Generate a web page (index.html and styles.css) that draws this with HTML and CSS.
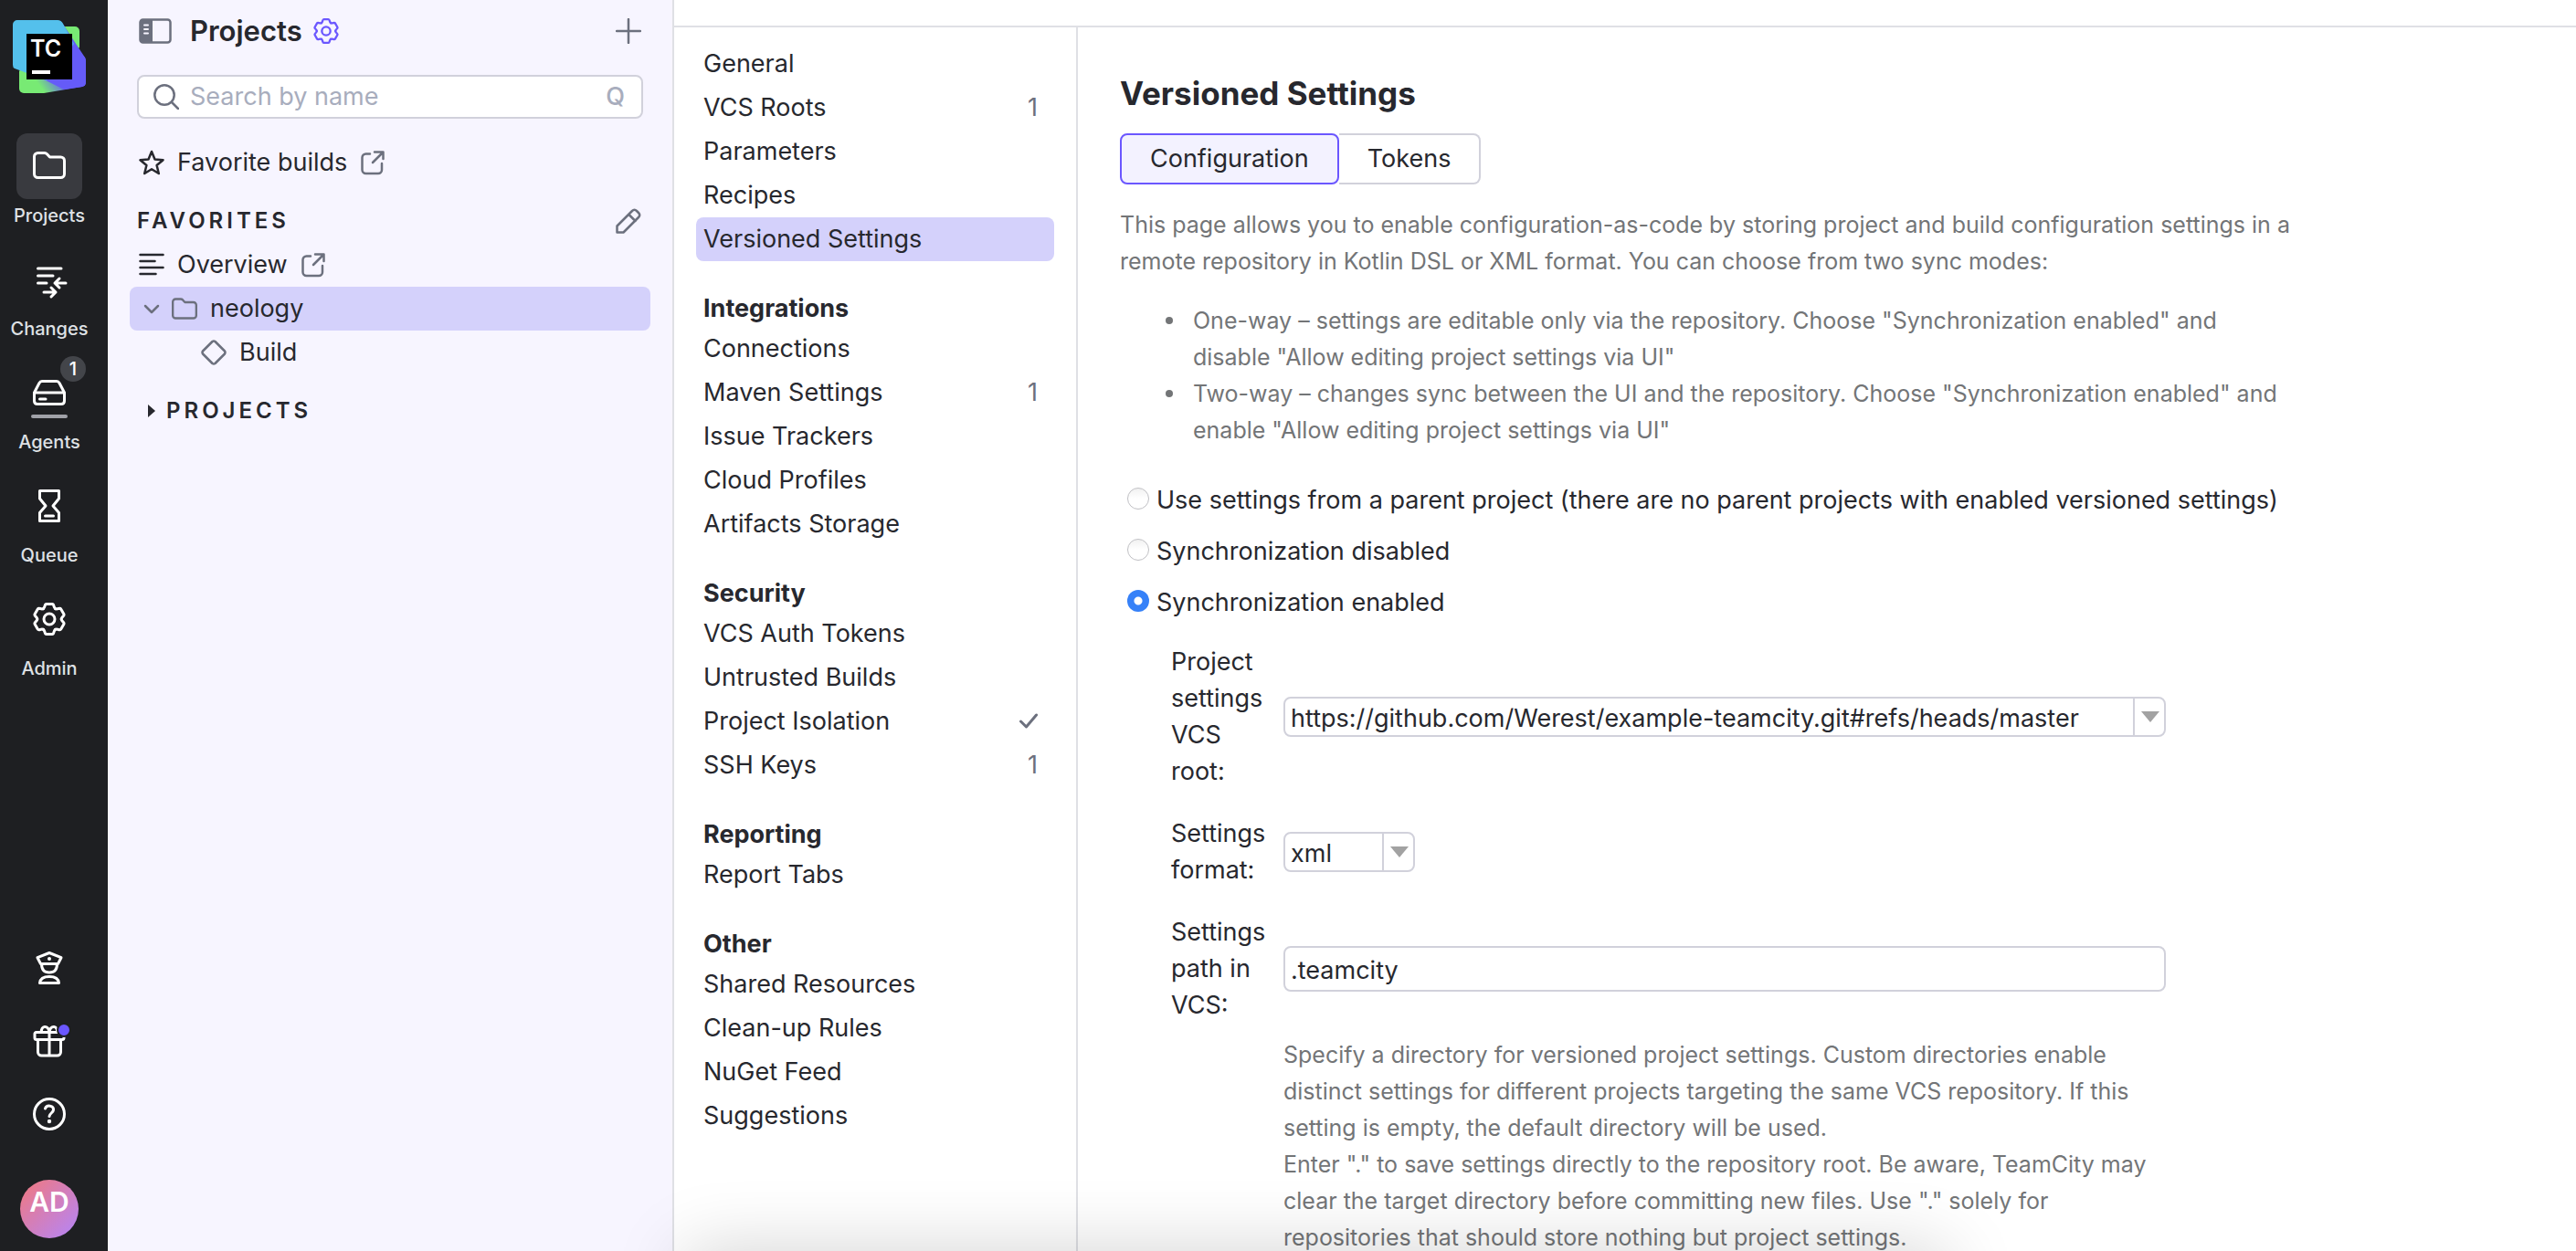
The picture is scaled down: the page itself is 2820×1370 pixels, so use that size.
FILE: index.html
```html
<!DOCTYPE html>
<html lang="en">
<head>
<meta charset="utf-8">
<title>Versioned Settings</title>
<link rel="stylesheet" href="styles.css">
</head>
<body>
<svg class="defs" aria-hidden="true">
  <symbol id="gear" viewBox="-18 -18 36 36">
    <g id="gear-teeth">
      <path id="tooth" d="M-6.6-11.4C-4.3-12.8-5.5-16.5-3.2-16.5H3.2C5.5-16.5 4.3-12.8 6.6-11.4"/>
      <use href="#tooth" transform="rotate(60)"/>
      <use href="#tooth" transform="rotate(120)"/>
      <use href="#tooth" transform="rotate(180)"/>
      <use href="#tooth" transform="rotate(240)"/>
      <use href="#tooth" transform="rotate(300)"/>
    </g>
    <circle r="6"/>
  </symbol>
  <symbol id="external" viewBox="0 0 28 28">
    <path d="M11 4.500H6.500a4 4 0 0 0-4 4V22a4 4 0 0 0 4 4H20a4 4 0 0 0 4-4v-7M16 2.500h9.500V10M25 3L14 14"/>
  </symbol>
  <symbol id="folder" viewBox="0 0 36 30">
    <path d="M1.500 5.500a4 4 0 0 1 4-4h7a4 4 0 0 1 3 1.200L18.500 6h12a4 4 0 0 1 4 4v14.500a4 4 0 0 1-4 4h-25a4 4 0 0 1-4-4z"/>
  </symbol>
</svg>

<div class="app">
  <nav class="rail" aria-label="Main">
    <a class="logo" href="#" aria-label="TeamCity">
      <svg width="80" height="80" viewBox="0 0 80 80">
        <defs>
          <linearGradient id="lg-low" x1="0.1" y1="0.8" x2="0.6" y2="0.5"><stop offset="0.25" stop-color="#78ea74"/><stop offset="0.85" stop-color="#655bf8"/></linearGradient>
          <linearGradient id="lg-blue" x1="0" y1="0" x2="0.9" y2="0.9"><stop offset="0.6" stop-color="#54c0ec"/><stop offset="1" stop-color="#5a7df5"/></linearGradient>
        </defs>
        <path d="M40 7h28a5 5 0 0 1 5 5v18L60 40z" fill="#78ea74"/>
        <path d="M7 56l28-36 30 5 14 16q1 2 1 4v23q0 4-4 5l-42 7H12a5 5 0 0 1-5-5z" fill="url(#lg-low)"/>
        <path d="M54 3l25 38q1 2 1 4v23q0 4-4 5l-20 3-28-14z" fill="#655bf8"/>
        <path d="M5 0h44q4 0 6 4l12 22-30 40L2 53q-2-1-2-4V5a5 5 0 0 1 5-5z" fill="url(#lg-blue)"/>
        <path d="M15 15h50v50H15z" fill="#000"/>
        <path d="M21 55h20v4H21z" fill="#fff"/>
        <text x="19" y="40" class="logo-text">TC</text>
      </svg>
    </a>
    <div class="rail-main">
      <a class="rail-item" href="#">
        <span class="rail-icon selected"><svg class="line" viewBox="0 0 40 40"><use href="#folder" x="2" y="4" width="36" height="30"/></svg></span>
        Projects
      </a>
      <a class="rail-item" href="#">
        <span class="rail-icon"><svg class="line" viewBox="0 0 40 40"><path d="M7.500 8H33M7.500 16H24M7.500 24H17M38 24H26M31 19l-5 5 5 5M14 34h13M22 29l5 5-5 5"/></svg></span>
        Changes
      </a>
      <a class="rail-item" href="#">
        <span class="rail-icon"><svg class="line" viewBox="0 0 40 40"><path d="M3.500 20L9 9.500Q10 7.500 12 7.500H28Q30 7.500 31 9.500L36.500 20V29Q36.500 32.500 33 32.500H7Q3.500 32.500 3.500 29ZM3.500 20H36.500M9.500 27H16"/><path class="agent-bar" d="M2 46H38"/></svg><span class="badge">1</span></span>
        Agents
      </a>
      <a class="rail-item" href="#">
        <span class="rail-icon"><svg class="line" viewBox="0 0 40 40"><path d="M9.500 3.500h21v8.500L24 20l6.500 7.500v9h-21v-9L16 20l-6.500-8zM15.500 31h9"/></svg></span>
        Queue
      </a>
      <a class="rail-item" href="#">
        <span class="rail-icon"><svg class="line" viewBox="0 0 40 40"><use href="#gear" x="2" y="2" width="36" height="36"/></svg></span>
        Admin
      </a>
    </div>
    <div class="rail-foot">
      <button class="rail-button" aria-label="Investigations"><svg class="line" viewBox="0 0 40 40"><path d="M20 3.500L33 8.700 29.500 15.500h-19L7 8.700ZM11.500 15.500C11.500 22 15 25 20 25S28.500 22 28.500 15.500M9.500 36.500C10 32 14 29.500 20 29.500S30 32 30.500 36.500Z"/><circle class="solid" cx="20" cy="10" r="2"/></svg></button>
      <button class="rail-button" aria-label="What's new"><svg class="line" viewBox="0 0 40 40"><path d="M5.500 10.500h29a1.500 1.500 0 0 1 1.500 1.500v4.500a2 2 0 0 1-2 2H6a2 2 0 0 1-2-2V12a1.500 1.500 0 0 1 1.500-1.500zM7.500 19v13a4 4 0 0 0 4 4h17a4 4 0 0 0 4-4V19M20 10.500V36M11.500 10c-1-6.500 7-8 8.500 0 1.500-8 9.500-6.500 8.500 0"/><circle class="dot" cx="36" cy="8" r="7"/></svg></button>
      <button class="rail-button" aria-label="Help"><svg class="line" viewBox="0 0 40 40"><circle cx="20" cy="20" r="16.500"/><path d="M15.500 14c1.500-4.500 9.500-3.500 9 1.500-.3 3-4 3.500-4.500 7"/><circle class="solid" cx="20" cy="28" r="2.200"/></svg></button>
      <button class="avatar">AD</button>
    </div>
  </nav>

  <aside class="sidebar">
    <header class="side-head">
      <svg class="gray" width="36" height="28" viewBox="0 0 36 28"><rect x="1.500" y="1.500" width="33" height="25" rx="3"/><path class="fill" d="M2 2h13v24H2z"/><path class="dash" d="M6 7.500h4M6 12h4M6 16.500h4"/></svg>
      <h2 class="side-title">Projects</h2>
      <svg class="accent" width="28" height="28"><use href="#gear"/></svg>
      <button class="icon-button" aria-label="Add"><svg class="gray" width="28" height="28"><path d="M14 1v26M1 14h26"/></svg></button>
    </header>
    <label class="search">
      <svg class="gray" width="28" height="28"><circle cx="12" cy="12" r="10.700"/><path d="M20 20l7 7"/></svg>
      <input type="text" placeholder="Search by name" aria-label="Search by name">
      <kbd>Q</kbd>
    </label>
    <a class="side-row" href="#">
      <svg class="dark" width="28" height="28"><path d="M14 2l3.500 8.500 9 .7-6.900 5.800 2.200 9L14 21.200 6.200 26l2.200-9L1.500 11.200l9-.7z"/></svg>
      Favorite builds
      <svg class="gray" width="28" height="28"><use href="#external"/></svg>
    </a>
    <div class="side-section">
      <h3>FAVORITES</h3>
      <button class="icon-button" aria-label="Edit"><svg class="gray" width="28" height="28"><path d="M1.500 26.500v-7L18 3q2.500-2.500 5 0l2 2q2.500 2.500 0 5L8.500 26.500zM14.500 7l7 7"/></svg></button>
    </div>
    <a class="side-row" href="#">
      <svg class="dark" width="28" height="28"><path d="M1.500 3h25M1.500 10h16M1.500 17h25M1.500 24h17"/></svg>
      Overview
      <svg class="gray" width="28" height="28"><use href="#external"/></svg>
    </a>
    <a class="side-row current" href="#">
      <svg class="gray" width="28" height="28"><path d="M7 11l7 7 7-7"/></svg>
      <svg class="gray folder" width="28" height="24"><use href="#folder"/></svg>
      neology
    </a>
    <a class="side-row child" href="#">
      <svg class="gray" width="28" height="28"><path d="M12.500 2q1.500-1 3 0L26 12.500q1 1.500 0 3L15.500 26q-1.500 1-3 0L2 15.500q-1-1.500 0-3z"/></svg>
      Build
    </a>
    <div class="side-section tree">
      <svg width="8" height="14" viewBox="0 0 8 14"><path d="M0 0l8 7-8 7z" fill="#27282e"/></svg>
      <h3>PROJECTS</h3>
    </div>
  </aside>

  <div class="workspace">
    <div class="topbar"></div>
    <div class="columns">
      <nav class="menu" aria-label="Project settings">
        <a href="#">General</a>
        <a href="#">VCS Roots <span>1</span></a>
        <a href="#">Parameters</a>
        <a href="#">Recipes</a>
        <a href="#" class="current">Versioned Settings</a>
        <h4>Integrations</h4>
        <a href="#">Connections</a>
        <a href="#">Maven Settings <span>1</span></a>
        <a href="#">Issue Trackers</a>
        <a href="#">Cloud Profiles</a>
        <a href="#">Artifacts Storage</a>
        <h4>Security</h4>
        <a href="#">VCS Auth Tokens</a>
        <a href="#">Untrusted Builds</a>
        <a href="#">Project Isolation <svg class="gray check" width="20" height="20"><path d="M1.500 10l6 6L18.500 3"/></svg></a>
        <a href="#">SSH Keys <span>1</span></a>
        <h4>Reporting</h4>
        <a href="#">Report Tabs</a>
        <h4>Other</h4>
        <a href="#">Shared Resources</a>
        <a href="#">Clean-up Rules</a>
        <a href="#">NuGet Feed</a>
        <a href="#">Suggestions</a>
      </nav>

      <main class="content">
        <h1>Versioned Settings</h1>
        <div class="tabs">
          <button class="tab active">Configuration</button>
          <button class="tab">Tokens</button>
        </div>
        <p class="note">This page allows you to enable configuration-as-code by storing project and build configuration settings in a remote repository in Kotlin DSL or XML format. You can choose from two sync modes:</p>
        <ul class="note modes">
          <li>One-way – settings are editable only via the repository. Choose "Synchronization enabled" and disable "Allow editing project settings via UI"</li>
          <li>Two-way – changes sync between the UI and the repository. Choose "Synchronization enabled" and enable "Allow editing project settings via UI"</li>
        </ul>
        <form>
          <div class="options">
            <label class="option"><input type="radio" name="sync">Use settings from a parent project (there are no parent projects with enabled versioned settings)</label>
            <label class="option"><input type="radio" name="sync">Synchronization disabled</label>
            <label class="option"><input type="radio" name="sync" checked>Synchronization enabled</label>
          </div>
          <div class="fields">
            <label for="root">Project settings VCS root:</label>
            <div class="picker"><select id="root"><option>https://github.com/Werest/example-teamcity.git#refs/heads/master</option></select><span class="arrow"><svg width="20" height="12"><path d="M0 0h20L10 12z" fill="#a2a2a2"/></svg></span></div>
            <label for="format">Settings format:</label>
            <div class="picker small"><select id="format"><option>xml</option></select><span class="arrow"><svg width="20" height="12"><path d="M0 0h20L10 12z" fill="#a2a2a2"/></svg></span></div>
            <label for="path">Settings path in VCS:</label>
            <input id="path" class="path" type="text" value=".teamcity">
            <p class="note help">Specify a directory for versioned project settings. Custom directories enable distinct settings for different projects targeting the same VCS repository. If this setting is empty, the default directory will be used.<br>Enter "." to save settings directly to the repository root. Be aware, TeamCity may clear the target directory before committing new files. Use "." solely for repositories that should store nothing but project settings.</p>
          </div>
        </form>
      </main>
    </div>
  </div>
</div>
<div class="bottom-shadow"></div>
</body>
</html>
```
FILE: styles.css
```css
* { box-sizing: border-box; }

body {
  margin: 0;
  color: #27282e;
  background: #fff;
  font-family: Inter, "Liberation Sans", sans-serif;
  font-size: 27px;
  line-height: 40px;
}

h1, h2, h3, h4, p, ul { margin: 0; }
a { color: inherit; text-decoration: none; }
button, input, select { font: inherit; color: inherit; }
button { padding: 0; border: 0; background: none; }
svg { display: block; flex: none; }
.defs { position: absolute; width: 0; height: 0; }

.app { display: flex; height: 100vh; overflow: hidden; }

/* Icon strokes */
.line, .gray, .dark, .accent {
  fill: none;
  stroke-width: 2.5;
  stroke-linecap: round;
  stroke-linejoin: round;
}
.line { width: 40px; height: 40px; overflow: visible; stroke: #fff; stroke-width: 3; }
.gray { stroke: #6c707e; }
.dark { stroke: #27282e; }
.accent { stroke: #6b57ff; stroke-width: 3; }
.gray .fill { fill: #6c707e; stroke: none; }
.gray .dash { stroke: #f7f5ff; stroke-width: 2; }
.line .solid { fill: #fff; stroke: none; }
.line .dot { fill: #6b57ff; stroke: #1e1f22; stroke-width: 2; }
.line .agent-bar { stroke: #a0a1a8; stroke-width: 4; }
.folder { stroke-width: 3; }

/* Rail */
.rail {
  display: flex;
  flex: none;
  flex-direction: column;
  width: 118px;
  padding: 22px 10px 14px 0;
  align-items: center;
  color: #dfe1e5;
  background: #1e1f22;
}
.logo-text { fill: #fff; font-size: 25px; font-weight: 600; }
.rail-main { display: grid; gap: 16px; margin-top: 44px; }
.rail-item {
  display: flex;
  flex-direction: column;
  align-items: center;
  font-size: 20px;
  font-weight: 500;
  line-height: 36px;
}
.rail-icon {
  position: relative;
  display: grid;
  width: 72px;
  height: 72px;
  place-items: center;
  border-radius: 12px;
}
.rail-icon.selected { background: #393a3f; }
.badge {
  position: absolute;
  top: -4px;
  right: -4px;
  width: 28px;
  height: 28px;
  border-radius: 14px;
  background: #43454a;
  color: #fff;
  line-height: 28px;
  text-align: center;
}
.rail-foot { display: grid; gap: 40px; margin-top: auto; justify-items: center; }
.avatar {
  width: 64px;
  height: 64px;
  margin-top: 12px;
  padding-bottom: 16px;
  border-radius: 32px;
  background: linear-gradient(135deg, #e87a90 15%, #b984ee 90%);
  color: #fff;
  font-size: 30px;
  font-weight: 600;
}

/* Projects sidebar */
.sidebar {
  flex: none;
  width: 620px;
  padding: 10px 24px;
  border-right: 2px solid #dfe0e5;
  background: #f7f5ff;
}
.side-head { display: flex; height: 48px; padding: 0 10px; align-items: center; gap: 12px; }
.side-title { margin-left: 8px; font-size: 31px; font-weight: 600; }
.icon-button { margin-left: auto; }
.search {
  display: flex;
  height: 48px;
  margin: 24px 8px;
  padding: 0 18px 0 16px;
  align-items: center;
  gap: 12px;
  border: 2px solid #d1d1db;
  border-radius: 8px;
  background: #fff;
}
.search input { flex: 1; min-width: 0; padding: 0; border: 0; outline: 0; background: none; }
.search input::placeholder { color: #a8adbd; opacity: 1; }
.search kbd { color: #a8adbd; font-family: inherit; font-size: 27px; font-weight: 500; }
.side-row {
  display: flex;
  height: 48px;
  padding: 0 10px;
  align-items: center;
  gap: 14px;
  border-radius: 8px;
}
.side-row.current { background: #d4d1fb; }
.side-row.current svg:first-child { margin-right: -6px; }
.side-row.child { padding-left: 78px; }
.side-section {
  display: flex;
  height: 48px;
  margin-top: 16px;
  padding: 0 10px 0 8px;
  align-items: center;
  gap: 12px;
}
.side-section h3 { font-size: 24px; font-weight: 600; letter-spacing: 4px; }
.side-section.tree { padding-left: 20px; }

/* Settings menu */
.workspace { display: flex; flex: 1; flex-direction: column; min-width: 0; }
.topbar { flex: none; height: 30px; border-bottom: 2px solid #dfe0e5; }
.columns { display: flex; flex: 1; min-height: 0; }
.menu {
  flex: none;
  width: 442px;
  padding: 16px 24px;
  border-right: 2px solid #dfe0e5;
}
.menu a {
  display: flex;
  height: 48px;
  padding: 0 18px 0 8px;
  align-items: center;
  justify-content: space-between;
  border-radius: 8px;
}
.menu a span { color: #6c707e; }
.menu a.current { background: #d4d1fb; }
.menu h4 { padding: 32px 8px 0; font-size: 27px; font-weight: 700; }
.check { stroke-width: 3; }

/* Page content */
.content { flex: 1; min-width: 0; padding: 48px 46px 0; }
.content h1 { font-size: 35px; font-weight: 700; line-height: 48px; }
.tabs { display: flex; margin: 20px 0 24px; }
.tab { height: 56px; padding: 0 31px; border: 2px solid #d1d1db; border-radius: 8px; }
.tab + .tab { border-left: 0; border-radius: 0 8px 8px 0; }
.tab.active { border-color: #6b57ff; background: #f3f2ff; }
.note { max-width: 1300px; color: #737577; font-size: 25px; }
.modes { margin-top: 25px; padding: 0 20px 0 80px; list-style: none; }
.modes li { position: relative; }
.modes li::before {
  content: "";
  position: absolute;
  top: 16px;
  left: -30px;
  width: 8px;
  height: 8px;
  border-radius: 4px;
  background: #737577;
}
.options { display: grid; gap: 16px; margin-top: 37px; padding-left: 8px; }
.option { display: flex; gap: 8px; }
.option input {
  flex: none;
  width: 24px;
  height: 24px;
  margin: 6px 0 0;
  appearance: none;
  border: 1px solid #c0c0c4;
  border-radius: 12px;
  background: linear-gradient(#f1f1f1, #fff 50%);
}
.option input:checked {
  border: 0;
  background: radial-gradient(circle, #fff 4px, #3681f8 5px);
}
.fields {
  display: grid;
  grid-template-columns: 108px minmax(0, 966px);
  margin-top: 25px;
  padding-left: 56px;
  align-items: center;
  gap: 28px 15px;
}
.picker { display: grid; }
.picker.small { width: 144px; }
.picker select, .arrow { grid-area: 1 / 1; }
.picker select, .path {
  width: 100%;
  height: 44px;
  padding: 2px 6px 0;
  appearance: none;
  border: 2px solid #d1d1db;
  border-radius: 8px;
  background: #fff;
}
.path { height: 50px; }
.arrow {
  display: grid;
  width: 36px;
  margin: 2px 0;
  place-items: center;
  justify-self: end;
  border-left: 2px solid #d1d1db;
  pointer-events: none;
}
.help { grid-column: 2; margin-top: -14px; }

.bottom-shadow {
  position: fixed;
  top: 100%;
  left: 750px;
  right: 690px;
  height: 80px;
  box-shadow: 0 0 80px rgba(0, 0, 0, 0.18);
  pointer-events: none;
}
```
